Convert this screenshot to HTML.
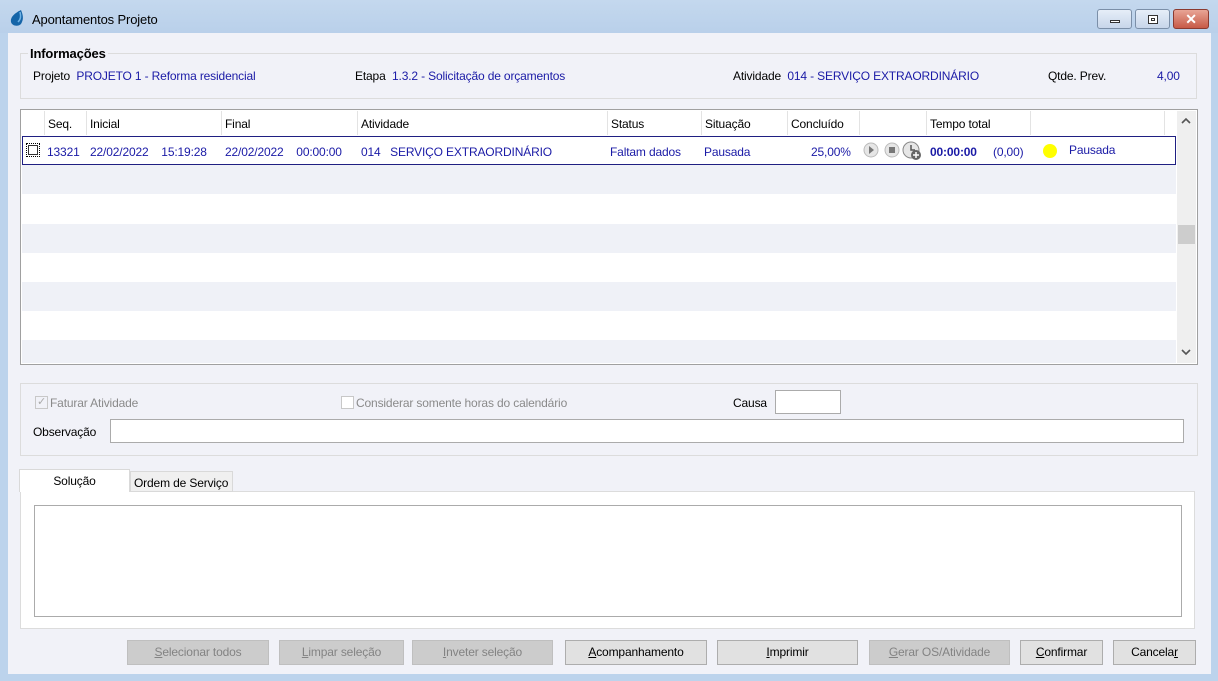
<!DOCTYPE html>
<html><head><meta charset="utf-8"><style>
*{margin:0;padding:0;box-sizing:border-box}
body{width:1218px;height:681px;background:#bcd3ec;font-family:"Liberation Sans",sans-serif;font-size:12px;letter-spacing:-0.15px;position:relative;overflow:hidden;color:#000}
.a{position:absolute;white-space:nowrap}
.b{color:#1a1aa6}
.client{position:absolute;left:8px;top:33px;width:1203px;height:641px;background:#f1f2f8}
.btn{position:absolute;top:640px;height:25px;border:1px solid #adadad;background:#e1e1e1;text-align:center;line-height:23px;font-size:12px}
.dis{background:#cccccc;color:#838383;border-color:#bfbfbf}
.hd{position:absolute;top:111px;height:24px;line-height:26px;padding-left:3px;border-right:1px solid #e3e3e3}
.row{position:absolute;left:22px;width:1154px;height:29px}
</style></head><body>
<div class="a" style="left:0;top:0;width:1218px;height:33px;background:linear-gradient(#c4d8ee,#b9d0ea)"></div>
<svg class="a" style="left:9px;top:9px" width="16" height="18" viewBox="0 0 16 18"><path d="M12 1 C14 6 15 10 12 15 C9 18 3 17 2 13 C1 8 6 4 12 1Z" fill="#1565a8"/><path d="M11 3 C12 7 12 10 9 13" stroke="#6fb3e6" stroke-width="1.5" fill="none"/></svg>
<div class="a" style="left:32px;top:12px;font-size:13px">Apontamentos Projeto</div>
<div class="a" style="left:1097px;top:9px;width:35px;height:20px;border:1px solid #7b8fa8;border-radius:3px;background:linear-gradient(#e6eef8,#c7d6ea)"><div style="position:absolute;left:12px;top:10px;width:10px;height:3px;border:1px solid #333;background:#fff"></div></div>
<div class="a" style="left:1135px;top:9px;width:35px;height:20px;border:1px solid #7b8fa8;border-radius:3px;background:linear-gradient(#e6eef8,#c7d6ea)"><div style="position:absolute;left:12px;top:5px;width:10px;height:9px;border:1px solid #333;background:#fff"><div style="margin:2px;width:4px;height:3px;border:1px solid #333"></div></div></div>
<div class="a" style="left:1173px;top:9px;width:36px;height:20px;border:1px solid #8b3a30;border-radius:3px;background:linear-gradient(#e8a596,#c75a47);color:#fff;font-weight:bold;text-align:center;line-height:18px;font-size:14px">✕</div>
<div class="client"></div>
<div class="a" style="left:20px;top:53px;width:1177px;height:46px;border:1px solid #dcdcdc"></div>
<div class="a" style="left:28px;top:46px;font-weight:bold;font-size:13px;background:#f1f2f8;padding:0 2px">Informações</div>
<div class="a" style="left:33px;top:69px">Projeto <span class="b">&nbsp;PROJETO 1 - Reforma residencial</span></div>
<div class="a" style="left:355px;top:69px">Etapa <span class="b">&nbsp;1.3.2 - Solicitação de orçamentos</span></div>
<div class="a" style="left:733px;top:69px">Atividade <span class="b">&nbsp;014 - SERVIÇO EXTRAORDINÁRIO</span></div>
<div class="a" style="left:1048px;top:69px">Qtde. Prev.</div>
<div class="a b" style="left:1157px;top:69px">4,00</div>
<div class="a" style="left:20px;top:109px;width:1178px;height:256px;border:1px solid #a0a0a0;background:#fff"></div>
<div class="hd" style="left:22px;width:23px"></div>
<div class="hd" style="left:45px;width:42px">Seq.</div>
<div class="hd" style="left:87px;width:135px">Inicial</div>
<div class="hd" style="left:222px;width:136px">Final</div>
<div class="hd" style="left:358px;width:250px">Atividade</div>
<div class="hd" style="left:608px;width:94px">Status</div>
<div class="hd" style="left:702px;width:86px">Situação</div>
<div class="hd" style="left:788px;width:72px">Concluído</div>
<div class="hd" style="left:860px;width:67px"></div>
<div class="hd" style="left:927px;width:104px">Tempo total</div>
<div class="hd" style="left:1031px;width:134px"></div>
<div class="row" style="top:165px;background:#eff1f7"></div>
<div class="row" style="top:224px;background:#eff1f7"></div>
<div class="row" style="top:282px;background:#eff1f7"></div>
<div class="row" style="top:340px;height:23px;background:#eff1f7"></div>
<div class="a" style="left:22px;top:136px;width:1154px;height:29px;border:1px solid #1f1f82;background:#fff"></div>
<div class="a" style="left:26px;top:143px;width:14px;height:14px;border:1px dotted #000;outline:1px solid #333;outline-offset:-3px"></div>
<div class="a b" style="left:47px;top:145px">13321</div>
<div class="a b" style="left:90px;top:145px">22/02/2022&nbsp;&nbsp;&nbsp;&nbsp;15:19:28</div>
<div class="a b" style="left:225px;top:145px">22/02/2022&nbsp;&nbsp;&nbsp;&nbsp;00:00:00</div>
<div class="a b" style="left:361px;top:145px">014&nbsp;&nbsp;&nbsp;SERVIÇO EXTRAORDINÁRIO</div>
<div class="a b" style="left:610px;top:145px">Faltam dados</div>
<div class="a b" style="left:704px;top:145px">Pausada</div>
<div class="a b" style="left:811px;top:145px">25,00%</div>
<svg class="a" style="left:863px;top:141px" width="62" height="20"><circle cx="8" cy="9" r="7" fill="#e6e6e6" stroke="#bbb"/><path d="M6 5 L11 9 L6 13Z" fill="#777"/><circle cx="29" cy="9" r="7" fill="#e6e6e6" stroke="#bbb"/><rect x="26" y="6" width="6" height="6" fill="#777"/><circle cx="48" cy="9" r="8" fill="#e6e6e6" stroke="#888"/><path d="M48 4 V9 H52" stroke="#555" stroke-width="1.5" fill="none"/><circle cx="53" cy="14" r="5" fill="#666"/><path d="M50 14 H56 M53 11 V17" stroke="#fff" stroke-width="1.5"/></svg>
<div class="a b" style="left:930px;top:145px;font-weight:bold">00:00:00</div>
<div class="a b" style="left:993px;top:145px">(0,00)</div>
<div class="a" style="left:1043px;top:144px;width:14px;height:14px;border-radius:50%;background:#ffff00"></div>
<div class="a b" style="left:1069px;top:143px">Pausada</div>
<div class="a" style="left:1177px;top:111px;width:19px;height:252px;background:#efefef"></div>
<svg class="a" style="left:1181px;top:117px" width="10" height="8"><path d="M1 6 L5 2 L9 6" stroke="#555" stroke-width="1.6" fill="none"/></svg>
<svg class="a" style="left:1181px;top:348px" width="10" height="8"><path d="M1 2 L5 6 L9 2" stroke="#555" stroke-width="1.6" fill="none"/></svg>
<div class="a" style="left:1178px;top:225px;width:17px;height:19px;background:#cdcdcd"></div>
<div class="a" style="left:20px;top:383px;width:1178px;height:73px;border:1px solid #dcdcdc"></div>
<div class="a" style="left:35px;top:396px;width:13px;height:13px;border:1px solid #c8c8c8;background:#f1f2f8;color:#aaa;font-size:11px;line-height:11px;text-align:center">✓</div>
<div class="a" style="left:50px;top:396px;color:#8a8a8a">Faturar Atividade</div>
<div class="a" style="left:341px;top:396px;width:13px;height:13px;border:1px solid #c8c8c8;background:#fff"></div>
<div class="a" style="left:356px;top:396px;color:#8a8a8a">Considerar somente horas do calendário</div>
<div class="a" style="left:733px;top:396px">Causa</div>
<div class="a" style="left:775px;top:390px;width:66px;height:24px;border:1px solid #ababab;background:#fff"></div>
<div class="a" style="left:33px;top:425px">Observação</div>
<div class="a" style="left:110px;top:419px;width:1074px;height:24px;border:1px solid #ababab;background:#fff"></div>
<div class="a" style="left:20px;top:491px;width:1175px;height:138px;border:1px solid #dcdcdc;background:#fff"></div>
<div class="a" style="left:130px;top:471px;width:103px;height:21px;border:1px solid #d9d9d9;background:#f0f0f0;padding:4px 0 0 3px">Ordem de Serviço</div>
<div class="a" style="left:19px;top:469px;width:111px;height:23px;border:1px solid #d9d9d9;border-bottom:none;background:#fff;text-align:center;padding-top:4px">Solução</div>
<div class="a" style="left:34px;top:505px;width:1148px;height:112px;border:1px solid #ababab;background:#fff"></div>
<div class="btn dis" style="left:127px;width:142px"><u>S</u>elecionar todos</div>
<div class="btn dis" style="left:279px;width:125px"><u>L</u>impar seleção</div>
<div class="btn dis" style="left:412px;width:141px"><u>I</u>nveter seleção</div>
<div class="btn" style="left:565px;width:142px"><u>A</u>companhamento</div>
<div class="btn" style="left:717px;width:141px"><u>I</u>mprimir</div>
<div class="btn dis" style="left:869px;width:141px"><u>G</u>erar OS/Atividade</div>
<div class="btn" style="left:1020px;width:83px"><u>C</u>onfirmar</div>
<div class="btn" style="left:1113px;width:83px">Cancela<u>r</u></div>
</body></html>
